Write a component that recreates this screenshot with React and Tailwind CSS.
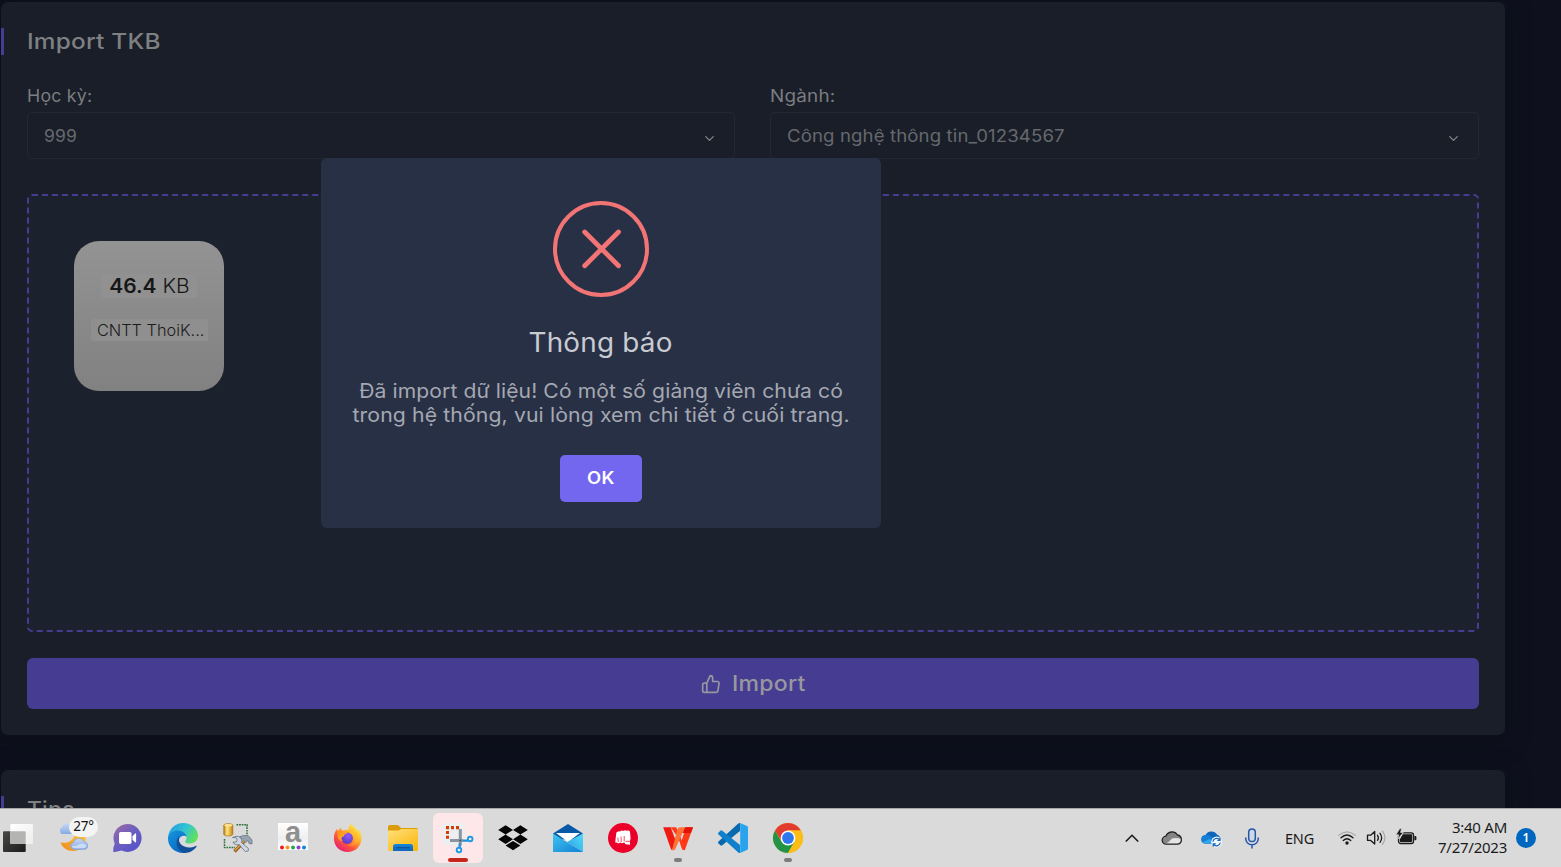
import React from "react";
import { FiThumbsUp, FiChevronDown } from "react-icons/fi";

function Icon({ children }) {
  return (
    <svg viewBox="0 0 30 30" className="block h-[30px] w-[30px] overflow-visible">
      {children}
    </svg>
  );
}

function TaskView() {
  return (
    <Icon>
      <defs>
        <linearGradient id="tvDark" x1="0" y1="0" x2="1" y2="1">
          <stop offset="0" stopColor="#4a4a48" />
          <stop offset="1" stopColor="#1b1b1a" />
        </linearGradient>
        <linearGradient id="tvLight" x1="0" y1="0" x2="1" y2="1">
          <stop offset="0" stopColor="#fff" />
          <stop offset="1" stopColor="#ededed" />
        </linearGradient>
      </defs>
      <rect x="0" y="8.3" width="22.7" height="20.7" rx="1" fill="url(#tvDark)" />
      <rect x="7.3" y="1" width="22.7" height="20" rx="1" fill="url(#tvLight)" />
      <path d="M7.3 8.3h14.4a1 1 0 0 1 1 1V21H8.3a1 1 0 0 1-1-1z" fill="#b4b4b3" />
    </Icon>
  );
}

function Weather() {
  return (
    <div className="relative">
      <Icon>
        <defs>
          <linearGradient id="wxMoon" x1="0" y1="1" x2="1" y2="0">
            <stop offset="0" stopColor="#f08a1e" />
            <stop offset="1" stopColor="#ffc93c" />
          </linearGradient>
          <linearGradient id="wxCloud" x1="0" y1="0" x2="0" y2="1">
            <stop offset="0" stopColor="#c7d9f6" />
            <stop offset="1" stopColor="#87aae3" />
          </linearGradient>
        </defs>
        <path d="M2.6 19.5C9 21 17.5 18 17.5 7c6 0 10 4.500 10 9.500 0 7-5.500 11.500-12.500 11.500C9 28 4.500 25 2.600 19.500z" fill="url(#wxMoon)" />
        <path d="M4 11a3.800 3.800 0 0 1 0-6.800A6.500 6.500 0 0 1 15 2.500 5 5 0 0 1 19 11z" fill="url(#wxCloud)" />
        <path d="M16 26.500a3.600 3.600 0 0 1-.4-7.100 5.500 5.500 0 0 1 10.300-.8 4 4 0 0 1 .8 7.900z" fill="url(#wxCloud)" stroke="#7ea2dc" strokeWidth=".6" />
        <path d="M16 25.300q-2-.6-2.200-2.600 4 .8 6-.8 1.800-1.400 4.200-1.200 3 0 4.400 2-.2 2-2.400 2.600z" fill="#d9e7fb" opacity=".75" />
      </Icon>
      <div className="absolute left-[11px] top-[-6px] flex h-5 w-[29px] items-center justify-center rounded-full bg-[#f4f4f4] text-[13.5px] leading-none tracking-[-0.3px] text-[#151515]">
        27°
      </div>
    </div>
  );
}

function Chat() {
  return (
    <Icon>
      <defs>
        <linearGradient id="chatBg" x1="0" y1="0" x2=".8" y2="1">
          <stop offset="0" stopColor="#a66a9f" />
          <stop offset=".45" stopColor="#6f60be" />
          <stop offset="1" stopColor="#5552cb" />
        </linearGradient>
      </defs>
      <path d="M14.500 1a14 14 0 1 1-6 26.600L2 29H.3V25l1.400-4.200A14 14 0 0 1 14.500 1z" fill="url(#chatBg)" />
      <rect x="6" y="9" width="12.500" height="12" rx="1.800" fill="#fff" />
      <path d="M19.500 13.200l2.600-2.600q1-.7 1 .6v7.600q0 1.200-1 .5l-2.600-2.500z" fill="#fff" />
    </Icon>
  );
}

function Edge() {
  return (
    <Icon>
      <defs>
        <linearGradient id="edTop" x1="0" y1=".3" x2="1" y2=".7">
          <stop offset="0" stopColor="#249fe0" />
          <stop offset=".5" stopColor="#32c5d2" />
          <stop offset="1" stopColor="#67e44c" />
        </linearGradient>
        <linearGradient id="edLeft" x1="0" y1="0" x2=".7" y2="1">
          <stop offset="0" stopColor="#1596e0" />
          <stop offset="1" stopColor="#0866c0" />
        </linearGradient>
      </defs>
      <path d="M.2 13.500C1.200 5.500 7.500 0 15 0c8.700 0 15 6 15 12.800 0 5-4 7.700-8 7.700-3.600 0-5-1.200-4.800-2.100.2-.8 1.400-1.600 1.400-3.900C18.600 11 14.600 8 10 8 5 8 1.500 10.200.2 13.500z" fill="url(#edTop)" />
      <path d="M.1 13.800C1.300 9.700 5.200 7.600 9.600 7.600c5 0 8.800 3 9 6.400-1-2-6.600-2-7.600 2.500-1.100 5.500 2.500 10.600 8.100 11.800l-1.400 1.500C7.500 31 0 24.200 0 15.500z" fill="url(#edLeft)" />
      <path d="M11.600 13.200c-5 3.500-4.200 13.500 4.700 16.700 5.100.2 9.500-2.300 12.200-6.200.5-.8-.1-1.200-.9-.8-8 3.700-16.400.2-16.700-6.300 0-1.300.2-2.400.7-3.400z" fill="#114f98" />
    </Icon>
  );
}

function Tools() {
  return (
    <Icon>
      <defs>
        <linearGradient id="toCyl" x1="0" y1="0" x2="1" y2="0">
          <stop offset="0" stopColor="#b77a0c" />
          <stop offset=".35" stopColor="#ffe78b" />
          <stop offset="1" stopColor="#c98406" />
        </linearGradient>
      </defs>
      <path d="M.8 2.300C1 .1 9.600.1 9.800 2.300v9c-.2 2.200-8.800 2.200-9 0z" fill="url(#toCyl)" stroke="#a36e0b" strokeWidth=".7" />
      <ellipse cx="5.300" cy="2.300" rx="4" ry="1.300" fill="#ffe391" />
      <path d="M13.500 1.800H24v9.500M1.500 16v8.500H12" fill="none" stroke="#2c6f38" strokeWidth="1.500" strokeDasharray="1.700 .9" />
      <path d="M21 18.500l-9.500 10" stroke="#9a621d" strokeWidth="3.400" />
      <path d="M21 18l-9 9.500" stroke="#d9a24d" strokeWidth="1.200" />
      <path d="M16.500 13.800l4-1.300h4.500l4 4.500v4l-3-.5-1-3-2.500 2-3-3.200z" fill="#98a3b1" stroke="#5e6b7a" strokeWidth=".7" />
      <path d="M9.500 14.500l3.600.2 1.200 2.300-1 2-3.400.1c1.300 2.700 4 3.200 6.300 2.400l6 7 3-.5.2-2.500-7-6c.8-3-.8-5.600-4.400-6.300z" fill="#cfd8e2" stroke="#627182" strokeWidth=".8" />
    </Icon>
  );
}

function LetterApp() {
  const dots = [
    [4, "#ed1c24"],
    [9.500, "#f7941d"],
    [15, "#22ab4b"],
    [20.500, "#8f3fd4"],
    [26, "#0f86dd"],
  ];
  return (
    <Icon>
      <defs>
        <linearGradient id="ltBg" x1="0" y1="0" x2="0" y2="1">
          <stop offset="0" stopColor="#fff" />
          <stop offset=".55" stopColor="#efefef" />
          <stop offset="1" stopColor="#fff" />
        </linearGradient>
      </defs>
      <rect width="30" height="27" fill="url(#ltBg)" />
      <text x="15" y="19" textAnchor="middle" fontSize="29" fontWeight="700" fill="#8f8f8f" fontFamily="Liberation Sans, sans-serif">
        a
      </text>
      {dots.map(([x, c]) => (
        <circle key={x} cx={x} cy="24.400" r="2" fill={c} />
      ))}
    </Icon>
  );
}

function Firefox() {
  return (
    <Icon>
      <defs>
        <linearGradient id="ffBody" x1=".9" y1=".05" x2=".2" y2="1">
          <stop offset="0" stopColor="#fff44f" />
          <stop offset=".35" stopColor="#ffb82c" />
          <stop offset=".65" stopColor="#ff5a36" />
          <stop offset="1" stopColor="#e3157c" />
        </linearGradient>
        <radialGradient id="ffGlobe" cx=".6" cy=".3" r=".8">
          <stop offset="0" stopColor="#9059ff" />
          <stop offset="1" stopColor="#5438b5" />
        </radialGradient>
        <linearGradient id="ffTail" x1="0" y1="0" x2="1" y2="1">
          <stop offset="0" stopColor="#ff8a1f" />
          <stop offset="1" stopColor="#ffb72b" />
        </linearGradient>
      </defs>
      <path d="M18.500.5c1 3 5 4.500 6.300 8.300.3-1 .2-2.100-.2-3 2.800 3 4.100 6.200 3.900 10.200-.4 7.700-6.600 13-13.800 13C7 29 .9 23.200.9 15.500c0-3.700 1-7.200 3.300-10 0 1.200.3 2 .8 2.700C6 7 6.500 6 7.800 4.200 7.900 6 8.500 7 9.500 7.600l6-1C15.600 4 17 2 18.500.5z" fill="url(#ffBody)" />
      <circle cx="14.200" cy="15.300" r="5.700" fill="url(#ffGlobe)" />
      <path d="M5 8.200c2-1 4-.6 5.500.5 1.700-.2 3 .2 4 .8-.3 1.500-2.800 1.700-3.300 2.500.2 1.700-2.700 1.800-2.900 3.300-.1 1.100.5 2 1.600 2.500C6 18.500 3 13.700 5 8.200z" fill="url(#ffTail)" />
      <path d="M15.500 6.600c3.500.9 6 3.700 6.400 7.400.3 4.700-3.300 8.100-7.500 8 3.800 2.300 10.300.3 11.300-5.300C26.500 12 22.500 8 19.700 4.800z" fill="#ffc02f" opacity=".35" />
    </Icon>
  );
}

function Folder() {
  return (
    <Icon>
      <defs>
        <linearGradient id="foFront" x1="0" y1="0" x2=".8" y2="1">
          <stop offset="0" stopColor="#ffe07b" />
          <stop offset="1" stopColor="#fbb80f" />
        </linearGradient>
        <linearGradient id="foBlue" x1="0" y1="0" x2="0" y2="1">
          <stop offset="0" stopColor="#1387dd" />
          <stop offset="1" stopColor="#0f66bb" />
        </linearGradient>
      </defs>
      <path d="M0 4q0-2 2-2h7.300q.8 0 1.400.7L13 5h15.500q1.500 0 1.500 1.500V14H0z" fill="#dc9b08" />
      <path d="M0 7.500h10.200q.8 0 1.500-.6L13.100 6H29q1 0 1 1v20q0 1-1 1H1q-1 0-1-1z" fill="url(#foFront)" />
      <path d="M5 28v-4.500q0-2.500 2.500-2.500h15q2.500 0 2.500 2.500V28z" fill="url(#foBlue)" />
      <path d="M8.500 24.700h13" stroke="#0b4c8f" strokeWidth="1.100" strokeLinecap="round" />
    </Icon>
  );
}

function Snip() {
  return (
    <Icon>
      <rect x="0" y="0" width="22" height="22" rx="2" fill="#eceef0" />
      <path d="M3 3h3v3.200h-3zM8 3h3v3.200h-3zM13 3h3v3.200h-3zM3 8h3v3h-3zM3 12.800h3v3h-3z" fill="#d83b01" />
      <path d="M17.300 6v16.500M7 17.500h13" stroke="#8a959f" strokeWidth="3" />
      <circle cx="17.300" cy="17.500" r="1.100" fill="#4d5a66" />
      <path d="M19.800 17.600h5M16.700 20.500v4.500" stroke="#1b93dc" strokeWidth="2.200" />
      <circle cx="27.200" cy="16" r="2.300" fill="none" stroke="#1b9ce4" strokeWidth="1.900" />
      <circle cx="16" cy="27" r="2.300" fill="none" stroke="#1b9ce4" strokeWidth="1.900" />
    </Icon>
  );
}

function Boxes() {
  return (
    <Icon>
      <path d="M7.600 2.200l7.400 4.700-7.400 4.700L.2 6.900zM22.400 2.200l7.400 4.700-7.400 4.700L15 6.900zM7.600 11.600l7.400 4.700L7.600 21 .2 16.300zM22.400 11.600l7.400 4.700-7.400 4.700-7.400-4.700zM15 17.900l7.400 4.700L15 27.300l-7.400-4.700z" fill="#050505" />
    </Icon>
  );
}

function Mail() {
  return (
    <Icon>
      <defs>
        <linearGradient id="maBody" x1="0" y1="0" x2="1" y2="1">
          <stop offset="0" stopColor="#3fc5ef" />
          <stop offset="1" stopColor="#1180d5" />
        </linearGradient>
        <linearGradient id="maR" x1="0" y1="1" x2="1" y2="0">
          <stop offset="0" stopColor="#279fe3" />
          <stop offset="1" stopColor="#54dcf8" />
        </linearGradient>
      </defs>
      <path d="M0 10.500L15 1l15 9.500-4 6H4z" fill="#0a58a8" />
      <path d="M3 10h24L15 19z" fill="#fff" />
      <path d="M30 10.500V29L14 19z" fill="url(#maR)" />
      <path d="M0 10.500L30 29H0z" fill="url(#maBody)" />
    </Icon>
  );
}

function Fist() {
  return (
    <Icon>
      <circle cx="15" cy="15" r="15" fill="#eb0029" />
      <path d="M8.300 9.800q1.700-2.300 3.700-1.300 1.500-1.600 3.400-.6 1.800-1.300 3.400-.1 2.800-.8 3.200 1.200l.6 6.500-.6 2.500.1 3.700-4.600-.5-1.200-1.700-2.400.8-1.400-.8-2.400.9-1.200-1-1.700.2z" fill="#fff" />
      <path d="M9.800 14.500l.5 4.500M13 13.500l.2 5.500M16.200 13v5.500M17.500 18.300h4.700" stroke="#eb0029" strokeWidth=".7" fill="none" />
    </Icon>
  );
}

function Office() {
  return (
    <Icon>
      <path d="M.2 4.300h7.500l5 13.500-3.400 9.200q-1 0-1.400-1z" fill="#ed1b10" />
      <path d="M7.700 4.300h5.500L19 18l3.300 8.800q-2 1.200-3-.8L15 14.500z" fill="#ff3a18" />
      <path d="M14.500 6q.7-1.700 2.500-1.700h5L12.300 26q-1 1.700-3.300 1z" fill="#ff7136" />
      <path d="M22.800 4.300H30l-7.500 21q-1 2.400-3.200 1.200l-1.800-5z" fill="#ff3915" />
      <path d="M22 4.300h8L28 10h-8.500z" fill="#e5140b" />
    </Icon>
  );
}

function Code() {
  return (
    <Icon>
      <path d="M22 0v8L4.300 22.300q-1 .7-1.900 0L.5 20.500q-1-1 0-2L20.300.6q.7-.6 1.700-.6z" fill="#0869ae" />
      <path d="M22 30v-8L4.300 7.700q-1-.7-1.900 0L.5 9.500q-1 1 0 2l19.800 17.900q.7.6 1.700.6z" fill="#0e80cc" />
      <path d="M22.200 0L29 3.100q1 .5 1 1.700v20.400q0 1.200-1 1.700L22.200 30z" fill="#28a4ef" />
    </Icon>
  );
}

function Browser() {
  return (
    <Icon>
      <circle cx="15" cy="15" r="15" fill="#fbbc12" />
      <path d="M15 15L8.800 18.500 2 7.500A15 15 0 0 1 28 7.500H15z" fill="#e23c30" />
      <path d="M2 7.500A15 15 0 0 0 15 30l6.500-11.300L15 15l-6.500 3.700z" fill="#239447" />
      <path d="M15 7.500h13A15 15 0 0 1 15 30l6.500-11.300z" fill="#fbbd16" />
      <circle cx="15" cy="15" r="7.400" fill="#fff" />
      <circle cx="15" cy="15" r="5.900" fill="#2d78ec" />
    </Icon>
  );
}

function Slot({ active, running, children }) {
  return (
    <div className="flex h-[58px] w-[55px] shrink-0 flex-col items-center pt-1">
      <div className={"flex h-[50px] w-[50px] flex-col items-center rounded-[6px] pt-[10px] " + (active ? "bg-[#fde7e8]" : "")}>
        {children}
        {active && <div className="mt-[5px] h-1 w-5 rounded-full bg-[#c4271b]" />}
        {running && <div className="mt-[5px] h-1 w-2 rounded-full bg-[#7c7c7c]" />}
      </div>
    </div>
  );
}

function Tray() {
  return (
    <div className="flex h-[58px] items-center pr-[25px] text-[#1a1a1a]">
      <svg className="block h-5 w-4" viewBox="0 0 16 20" fill="none" stroke="#1a1a1a" strokeWidth="1.600">
        <path d="M1.800 13.500L8 7.300l6.200 6.200" />
      </svg>
      <svg className="ml-[21px] block h-5 w-[22px]" viewBox="0 0 22 20">
        <path d="M5.500 16.200a4 4 0 0 1-.6-8A6.500 6.500 0 0 1 16.500 7a4.700 4.700 0 0 1 .3 9.200z" fill="#858585" />
        <path d="M4 16q4-1.500 7-5.500 3.500-1.300 9.800.6-.2 4.900-4.300 4.900z" fill="#e5e5e5" />
        <path d="M5.500 16.200a4 4 0 0 1-.6-8A6.500 6.500 0 0 1 16.500 7a4.700 4.700 0 0 1 .3 9.200z" fill="none" stroke="#242424" strokeWidth="1.300" />
      </svg>
      <svg className="ml-[18px] block h-5 w-[22px]" viewBox="0 0 22 20">
        <path d="M4.500 15.500a4 4 0 0 1 0-8.200A6.500 6.500 0 0 1 16 6.500q3 1 3 4l-4 5z" fill="#0f67bd" />
        <path d="M4.500 7.300q3-1 5.500 1.200l4.500 2.500v4.500h-10a4 4 0 0 1 0-8.200z" fill="#137fd6" />
        <path d="M1.500 14q3.500-1 7-3l5.500 4.500h-9q-2.400 0-3.500-1.500z" fill="#31a8ee" />
        <circle cx="15.600" cy="14" r="5.400" fill="#f4f7fa" />
        <path d="M11.900 13.600a3.900 3.900 0 0 1 6.800-1.900m.3-2v2.600h-2.600M19.300 14.500a3.900 3.900 0 0 1-6.800 1.900m-.3 2v-2.600h2.600" fill="none" stroke="#1065bc" strokeWidth="1.200" />
      </svg>
      <svg className="ml-5 block h-6 w-[18px]" viewBox="0 0 18 24" fill="none" stroke="#2357a8" strokeWidth="1.500">
        <rect x="5.700" y="3" width="6.600" height="12.500" rx="3.300" fill="#ced8e7" />
        <path d="M2.700 11.500v1a6.300 6.300 0 0 0 12.600 0v-1M9 19v3.500" />
      </svg>
      <span className="ml-[24px] w-[31px] whitespace-nowrap pt-px text-[14.500px] tracking-[-0.2px]">ENG</span>
      <svg className="ml-[22px] block h-5 w-[18px]" viewBox="0 0 18 20" fill="none" strokeLinecap="round">
        <path d="M.8 7.300q8.200-6.800 16.400 0" stroke="#aaa" strokeWidth="1.200" />
        <path d="M3 9.800q6-5.600 12 0M5.300 12.400q3.700-3.500 7.400 0" stroke="#1a1a1a" strokeWidth="1.400" />
        <circle cx="9" cy="15" r="1.700" fill="#1a1a1a" />
      </svg>
      <svg className="ml-[10px] block h-5 w-[21px]" viewBox="0 0 21 20" fill="none" stroke="#1a1a1a" strokeWidth="1.300" strokeLinecap="round" strokeLinejoin="round">
        <path d="M1.500 7.200h3.200L8.700 3.500v12.600l-4-3.700H1.500z" />
        <path d="M11.500 7.300q1.800 2.500 0 5M14 5.300q3.300 4.500 0 9" />
        <path d="M16.500 3.200q4.800 6.600 0 13.200" stroke="#aaa" />
      </svg>
      <svg className="ml-[9px] block h-5 w-[21px] overflow-visible" viewBox="0 0 21 20">
        <rect x="2.500" y="4.800" width="15" height="10.700" rx="2.200" fill="none" stroke="#1a1a1a" strokeWidth="1.300" />
        <path d="M6.800 6.300h8.400q1 0 1 1V13q0 1-1 1H4.800q-1 0-1-1v-1.500zM18.400 8h1q1 0 1 1v2.300q0 1-1 1h-1z" fill="#1a1a1a" />
        <path d="M3.800.6L-.2 6.800h2.900l-1 4.400L7.300 4.500H4.600L5.600.6z" fill="#1a1a1a" stroke="#dadada" strokeWidth=".8" />
      </svg>
      <div className="mb-[2px] ml-[19px] flex w-[71px] flex-col items-end whitespace-nowrap text-[15px] leading-[20px] tracking-[-0.25px]">
        <div>3:40 AM</div>
        <div>7/27/2023</div>
      </div>
      <div className="ml-[9px] flex h-5 w-5 items-center justify-center rounded-full bg-[#0067c0] text-[12px] font-semibold text-white">1</div>
    </div>
  );
}

function SelectField({ label, value, className, labelClass, valueClass }) {
  return (
    <div className={"min-w-0 " + className}>
      <div className="flex h-[26px] items-center pt-[3px] text-[17px] text-[#7b7d80]">
        <span className={"inline-block origin-left whitespace-nowrap tracking-[0.2px] " + labelClass}>{label}</span>
      </div>
      <div className="mt-1 flex h-[47px] items-center justify-between rounded-[5px] border border-[#242833] pl-4 pr-[17px] pt-[3px] text-[17px] text-[#67696d]">
        <span className={"inline-block origin-left whitespace-nowrap tracking-[0.1px] " + valueClass}>{value}</span>
        <FiChevronDown className="mt-0.5 h-[15px] w-[15px] text-[#85878a]" />
      </div>
    </div>
  );
}

function Panel({ title, titleClass, className, children }) {
  return (
    <section className={"rounded-[7px] bg-[#191e29] shadow-[0_4px_24px_0_rgba(10,12,22,0.6)] " + className}>
      <div className="flex h-[27px] items-center border-l-[3px] border-[#463c91] pl-[23px] text-[22px] font-medium text-[#7f8081]">
        <h2 className={"inline-block origin-left whitespace-nowrap tracking-[0.2px] " + titleClass}>{title}</h2>
      </div>
      {children}
    </section>
  );
}

function Dialog() {
  return (
    <div className="absolute left-[321px] top-[158px] flex h-[370px] w-[560px] flex-col items-center rounded-[6px] bg-[#283046]">
      <svg className="mt-[43px] block h-24 w-24 shrink-0" viewBox="0 0 96 96" fill="none" stroke="#f27474">
        <circle cx="48" cy="48" r="46" strokeWidth="4" />
        <path d="M31.700 31L65.500 64.800M65.500 31L31.700 64.800" strokeWidth="4.800" strokeLinecap="round" />
      </svg>
      <h3 className="mt-[27px] h-9 scale-x-[1.052] whitespace-nowrap text-[26.500px] leading-9 tracking-[0.2px] text-[#c9cbd1]">Thông báo</h3>
      <div className="mt-[19px] text-center text-[20px] leading-[24px] text-[#a5a8b1]">
        <div className="scale-x-[1.055] whitespace-nowrap tracking-[0.1px]">Đã import dữ liệu! Có một số giảng viên chưa có</div>
        <div className="scale-x-[1.062] whitespace-nowrap tracking-[0.1px]">trong hệ thống, vui lòng xem chi tiết ở cuối trang.</div>
      </div>
      <button className="mt-[28px] flex h-[47px] w-[82px] items-center justify-center rounded-[5px] bg-[#7367f0] pt-px text-[17px] font-semibold tracking-[0.3px] text-white">
        <span className="inline-block scale-x-[1.08]">OK</span>
      </button>
    </div>
  );
}

export default function App() {
  return (
    <div className="relative flex h-[867px] w-[1561px] flex-col overflow-hidden bg-[#0e111d] font-['Inter','Noto_Sans',sans-serif]">
      <main className="h-[808px] overflow-hidden pl-px pr-14 pt-0.5">
        <Panel title="Import TKB" titleClass="scale-x-[1.108]" className="h-[733px] pt-[26px]">
          <div className="px-[26px] pt-[27px]">
            <div className="flex gap-[35px]">
              <SelectField label="Học kỳ:" value="999" className="w-[708px]" labelClass="scale-x-[1.045]" valueClass="scale-x-[1.03]" />
              <SelectField label="Ngành:" value="Công nghệ thông tin_01234567" className="flex-1" labelClass="scale-x-[1.11]" valueClass="scale-x-[1.095]" />
            </div>
            <div className="mt-[35px] h-[438px] rounded-[5px] border-2 border-dashed border-[#463c91] bg-[#1c212e] pl-[45px] pt-[45px]">
              <div className="flex h-[150px] w-[150px] flex-col items-center rounded-[25px] bg-linear-to-b from-[#939393] to-[#818181] pt-[33px] text-[#171717]">
                <div className="flex h-6 w-24 items-center justify-center whitespace-nowrap rounded-[3px] bg-[#919191] pt-0.5 text-[19.500px]">
                  <span className="inline-block scale-x-[1.075]"><b className="font-semibold">46.4</b> <span className="font-light">KB</span></span>
                </div>
                <div className="ml-px mt-[21px] flex h-[22px] w-[117px] items-center justify-center whitespace-nowrap rounded-l-[3px] bg-[#8f8f8f] pl-[2px] text-[16px] font-light text-[#1c1c1c]">
                  <span className="inline-block scale-x-[1.02]">CNTT ThoiK...</span>
                </div>
              </div>
            </div>
            <button className="mt-[26px] flex h-[51px] w-full items-center justify-center gap-[11px] rounded-[6px] bg-[#463c91] text-[21px] font-medium text-[#98979f]">
              <FiThumbsUp className="h-5 w-5" strokeWidth={2} />
              <span className="flex w-[74px]">
                <span className="inline-block origin-left scale-x-[1.1] tracking-[0.2px]">Import</span>
              </span>
            </button>
          </div>
        </Panel>
        <Panel title="Tips" titleClass="scale-x-[1.03]" className="mt-[35px] h-[120px] pt-[26px]" />
      </main>
      <footer className="flex h-[59px] justify-between border-t border-[#aaa9aa] bg-[#dadada] font-['Noto_Sans','Open_Sans',sans-serif]">
        <div className="-ml-[9.5px] flex">
          <Slot><TaskView /></Slot>
          <Slot><Weather /></Slot>
          <Slot><Chat /></Slot>
          <Slot><Edge /></Slot>
          <Slot><Tools /></Slot>
          <Slot><LetterApp /></Slot>
          <Slot><Firefox /></Slot>
          <Slot><Folder /></Slot>
          <Slot active><Snip /></Slot>
          <Slot><Boxes /></Slot>
          <Slot><Mail /></Slot>
          <Slot><Fist /></Slot>
          <Slot running><Office /></Slot>
          <Slot><Code /></Slot>
          <Slot running><Browser /></Slot>
        </div>
        <Tray />
      </footer>
      <Dialog />
    </div>
  );
}
